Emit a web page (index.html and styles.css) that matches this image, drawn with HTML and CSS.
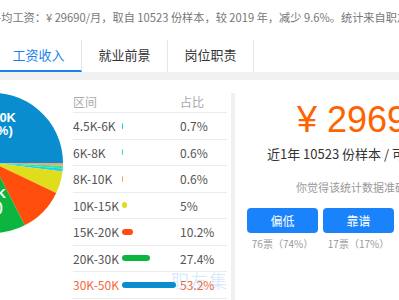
FILE: index.html
```html
<!DOCTYPE html>
<html lang="zh">
<head>
    <meta charset="UTF-8">
    <title>工资收入</title>
    <link rel="stylesheet" href="styles.css">
</head>
<body>
<div class="page">
    <p class="summary">平均工资：¥ 29690/月，取自 10523 份样本，较 2019 年，减少 9.6%。统计来自职友集</p>

    <div class="tabs">
        <a class="tab active">工资收入</a>
        <a class="tab">就业前景</a>
        <a class="tab">岗位职责</a>
    </div>

    <div class="content">
        <div class="dist">
            <div class="pie">
                <svg width="83" height="220" viewBox="0 0 83 220">
                    <path class="c3" d="M3 83 L73 83 A70 70 0 0 1 72.95 85.70 Z"/>
                    <path class="c2" d="M3 83 L72.95 85.70 A70 70 0 0 1 72.79 88.39 Z"/>
                    <path class="c1" d="M3 83 L72.79 88.39 A70 70 0 0 1 72.48 91.53 Z"/>
                    <path class="c4" d="M3 83 L72.48 91.53 A70 70 0 0 1 66.22 113.05 Z"/>
                    <path class="c5" d="M3 83 L66.22 113.05 A70 70 0 0 1 34.78 145.37 Z"/>
                    <path class="c6" d="M3 83 L34.78 145.37 A70 70 0 0 1 -64.27 102.34 Z"/>
                    <path class="c7" d="M3 83 L-64.27 102.34 A70 70 0 1 1 73 83 Z"/>
                    <text class="label" x="0" y="42">30K-50K</text>
                    <text class="label" x="0" y="55">(53.2%)</text>
                    <text class="label" x="-10" y="118">20K-30K</text>
                    <text class="label" x="-10" y="131">(27.4%)</text>
                </svg>
            </div>
            <div class="ranges">
                <div class="row head"><span>区间</span><span></span><span>占比</span></div>
                <div class="row"><span>4.5K-6K</span><span><i class="bar c1" style="width:1px"></i></span><span>0.7%</span></div>
                <div class="row"><span>6K-8K</span><span><i class="bar c2" style="width:1px"></i></span><span>0.6%</span></div>
                <div class="row"><span>8K-10K</span><span><i class="bar c3" style="width:1px"></i></span><span>0.6%</span></div>
                <div class="row"><span>10K-15K</span><span><i class="bar c4" style="width:5px"></i></span><span>5%</span></div>
                <div class="row"><span>15K-20K</span><span><i class="bar c5" style="width:11px"></i></span><span>10.2%</span></div>
                <div class="row"><span>20K-30K</span><span><i class="bar c6" style="width:28px"></i></span><span>27.4%</span></div>
                <div class="row hot"><span>30K-50K</span><span><i class="bar c7" style="width:54px"></i></span><span>53.2%</span></div>
            </div>
            <span class="mark">职友集</span>
        </div>

        <div class="stat">
            <p class="price">¥ 29690</p>
            <p class="sample">近1年 10523 份样本 / 可信度较高</p>
            <p class="ask">你觉得该统计数据准确吗？</p>
            <div class="votes">
                <div class="vote"><button>偏低</button><span>76票（74%）</span></div>
                <div class="vote"><button>靠谱</button><span>17票（17%）</span></div>
                <div class="vote"><button>偏高</button><span>9票（9%）</span></div>
            </div>
        </div>
    </div>
</div>
</body>
</html>
```

FILE: styles.css
```css
body {
    margin: 0;
    overflow: hidden;
    background: #fff;
    color: #333;
    font-family: "Noto Sans CJK SC", sans-serif;
}
.page {
    width: 520px;
    margin-left: -10px;
}
.summary {
    margin: 0;
    height: 32px;
    padding-top: 9px;
    box-sizing: border-box;
    font-size: 11.2px;
    line-height: 16px;
    color: #777;
    white-space: nowrap;
}

/* tabs */
.tabs {
    display: flex;
    margin-top: 8px;
    padding-left: 6px;
    border-bottom: 8px solid #f0f0f0;
}
.tab {
    width: 86px;
    height: 32px;
    box-sizing: border-box;
    border-right: 1px solid #e6e6e6;
    text-align: center;
    font-size: 13px;
    line-height: 30px;
    color: #333;
}
.tab.active {
    color: #1e7ff0;
    border-bottom: 2px solid #1e7ff0;
}

.content {
    display: flex;
    height: 220px;
}

/* left: pie + table */
.dist {
    position: relative;
    display: flex;
    flex: none;
    width: 241px;
}
.pie {
    flex: none;
    width: 83px;
}
.pie svg {
    display: block;
    overflow: visible;
}
.label {
    fill: #fff;
    font: bold 13px "Liberation Sans", sans-serif;
    text-anchor: middle;
}
.ranges {
    width: 154px;
    font-size: 12px;
    color: #555;
}
.row {
    display: grid;
    grid-template-columns: 49px 58px 1fr;
    align-items: center;
    height: 26.5px;
    box-sizing: border-box;
    border-bottom: 1px solid #ebebeb;
}
.row.head {
    height: 33px;
    padding-top: 12px;
    align-items: start;
    line-height: 20px;
    color: #aaa;
}
.row.hot {
    color: #f5683d;
}
.bar {
    display: block;
    height: 6px;
    border-radius: 3px;
}
.c1 { background: #23d3e3; fill: #23d3e3; }
.c2 { background: #37e39a; fill: #37e39a; }
.c3 { background: #f7a36b; fill: #f7a36b; }
.c4 { background: #dfdd1c; fill: #dfdd1c; }
.c5 { background: #ff4d0c; fill: #ff4d0c; }
.c6 { background: #0bb53f; fill: #0bb53f; }
.c7 { background: #0a8dcf; fill: #0a8dcf; }
.mark {
    position: absolute;
    left: 181px;
    top: 190px;
    font-size: 18px;
    line-height: 20px;
    letter-spacing: 1px;
    color: rgba(30, 130, 235, 0.18);
}

/* right: average + votes */
.stat {
    flex: none;
    width: 254px;
    margin-top: 13px;
    border-left: 4px solid #f0f0f0;
    text-align: center;
}
.price {
    margin: 0;
    padding-top: 7px;
    font-family: "Liberation Sans", sans-serif;
    font-size: 36px;
    line-height: 40px;
    color: #ff6200;
}
.sample {
    margin: 4px 0 0;
    font-size: 13px;
    line-height: 20px;
    color: #333;
    white-space: nowrap;
}
.ask {
    margin: 15px 0 0;
    font-size: 11px;
    line-height: 16px;
    color: #999;
}
.votes {
    display: flex;
    justify-content: center;
    gap: 5px;
    margin: 13px 0 0 -7px;
}
.vote {
    display: flex;
    flex-direction: column;
    width: 71px;
}
.vote button {
    height: 25px;
    border: 0;
    border-radius: 4px;
    background: #1a82fa;
    color: #fff;
    font-family: "Noto Sans CJK SC", sans-serif;
    font-size: 12px;
}
.vote span {
    margin-top: 4px;
    font-size: 10px;
    line-height: 14px;
    color: #999;
    white-space: nowrap;
}
```
